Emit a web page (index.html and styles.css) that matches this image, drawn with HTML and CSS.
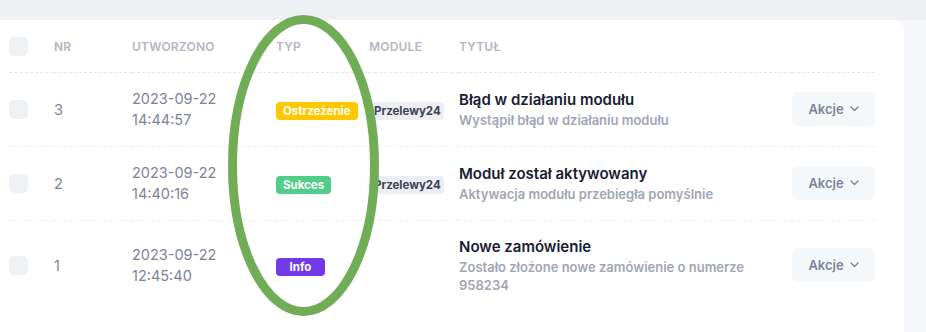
FILE: index.html
```html
<!DOCTYPE html>
<html lang="pl">
<head>
    <meta charset="UTF-8">
    <meta name="viewport" content="width=device-width, initial-scale=1.0">
    <title>Powiadomienia</title>
    <link rel="stylesheet" href="styles.css">
</head>
<body>
    <div class="page">
        <div class="card">
            <table class="log-table">
                <thead>
                    <tr>
                        <th class="col-check"><span class="check"></span></th>
                        <th class="col-nr">Nr</th>
                        <th class="col-date">Utworzono</th>
                        <th class="col-type">Typ</th>
                        <th class="col-module">Module</th>
                        <th class="col-title">Tytuł</th>
                        <th class="col-actions"></th>
                    </tr>
                </thead>
                <tbody>
                    <tr>
                        <td><span class="check"></span></td>
                        <td class="nr">3</td>
                        <td class="date">2023-09-22<br>14:44:57</td>
                        <td><span class="badge badge-warning">Ostrzeżenie</span></td>
                        <td><span class="badge badge-light">Przelewy24</span></td>
                        <td>
                            <div class="title">Błąd w działaniu modułu</div>
                            <div class="subtitle">Wystąpił błąd w działaniu modułu</div>
                        </td>
                        <td><button class="btn-actions">Akcje <svg width="9" height="6" viewBox="0 0 9 6"><polyline points="1,1 4.5,4.5 8,1" fill="none" stroke="currentColor" stroke-width="1.4" stroke-linecap="round" stroke-linejoin="round"/></svg></button></td>
                    </tr>
                    <tr>
                        <td><span class="check"></span></td>
                        <td class="nr">2</td>
                        <td class="date">2023-09-22<br>14:40:16</td>
                        <td><span class="badge badge-success">Sukces</span></td>
                        <td><span class="badge badge-light">Przelewy24</span></td>
                        <td>
                            <div class="title">Moduł został aktywowany</div>
                            <div class="subtitle">Aktywacja modułu przebiegła pomyślnie</div>
                        </td>
                        <td><button class="btn-actions">Akcje <svg width="9" height="6" viewBox="0 0 9 6"><polyline points="1,1 4.5,4.5 8,1" fill="none" stroke="currentColor" stroke-width="1.4" stroke-linecap="round" stroke-linejoin="round"/></svg></button></td>
                    </tr>
                    <tr>
                        <td><span class="check"></span></td>
                        <td class="nr">1</td>
                        <td class="date">2023-09-22<br>12:45:40</td>
                        <td><span class="badge badge-info">Info</span></td>
                        <td></td>
                        <td>
                            <div class="title">Nowe zamówienie</div>
                            <div class="subtitle">Zostało złożone nowe zamówienie o numerze 958234</div>
                        </td>
                        <td><button class="btn-actions">Akcje <svg width="9" height="6" viewBox="0 0 9 6"><polyline points="1,1 4.5,4.5 8,1" fill="none" stroke="currentColor" stroke-width="1.4" stroke-linecap="round" stroke-linejoin="round"/></svg></button></td>
                    </tr>
                </tbody>
            </table>
        </div>
    </div>

    <!-- annotation drawn over the screenshot -->
    <svg class="marker" width="926" height="332" viewBox="0 0 926 332">
        <ellipse cx="303.5" cy="165.5" rx="71" ry="146" fill="none" stroke="#71ad57" stroke-width="9"/>
    </svg>
</body>
</html>
```

FILE: styles.css
```css
body {
    margin: 0;
    font-family: Inter, "Noto Sans", sans-serif;
    background: #f5f7fa;
    position: relative;
    overflow: hidden;
    height: 332px;
}

.page {
    padding: 20px 22px 0 0;
    background: linear-gradient(to bottom, #eef0f4 0, #eef0f4 20px, #f5f7fa 20px);
}

.card {
    margin-left: -20px;
    background: #fff;
    border-radius: 10px;
    padding: 0 29px 0 29px;
    min-height: 400px;
}

.log-table {
    width: 100%;
    border-collapse: collapse;
}

.log-table th {
    height: 52px;
    padding: 0;
    text-align: left;
    font-size: 12px;
    font-weight: 600;
    color: #b5b5c3;
    text-transform: uppercase;
    letter-spacing: 0.2px;
    border-bottom: 1px dashed #e4e6ef;
}

.log-table td {
    padding: 15px 0 16px;
    vertical-align: middle;
    border-bottom: 1px dashed #eff0f4;
}

.log-table tbody tr:last-child td {
    border-bottom: none;
}

.col-check { width: 45px; }
.col-nr { width: 78px; }
.col-date { width: 144px; }
.col-type { width: 93px; }
.col-module { width: 90px; }
.col-actions { width: 83px; }

.check {
    display: block;
    width: 19px;
    height: 19px;
    border-radius: 5px;
    background: #eff2f5;
}

.nr,
.date {
    font-size: 14.5px;
    color: #7e8299;
    line-height: 21px;
}

.badge {
    display: inline-block;
    font-size: 11.5px;
    font-weight: 700;
    line-height: 18px;
    padding: 0 7px;
    border-radius: 4px;
    color: #fff;
}

.badge-warning { background: #ffc700; }
.badge-success { background: #50cd89; }

.badge-info {
    background: #7239ea;
    min-width: 49px;
    box-sizing: border-box;
    text-align: center;
}

.badge-light {
    background: #eceef4;
    color: #3f4254;
    margin-left: 2px;
    padding: 0 3px;
}

.title {
    font-size: 15px;
    font-weight: 600;
    color: #181c32;
    line-height: 22px;
}

.subtitle {
    max-width: 300px;
    font-size: 13px;
    font-weight: 600;
    color: #a1a5b7;
    line-height: 18px;
}

.btn-actions {
    display: flex;
    align-items: center;
    justify-content: center;
    gap: 6px;
    width: 83px;
    height: 34px;
    border: none;
    border-radius: 5px;
    background: #f5f8fa;
    color: #7e8299;
    font-family: inherit;
    font-size: 13px;
    font-weight: 600;
}

.marker {
    position: absolute;
    top: 0;
    left: 0;
    pointer-events: none;
}
```
